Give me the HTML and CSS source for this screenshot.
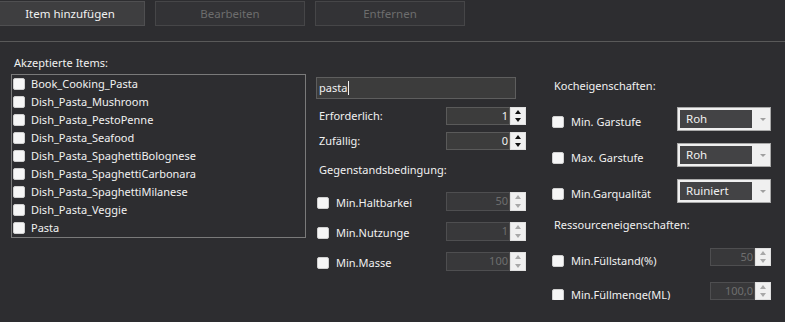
FILE: index.html
```html
<!DOCTYPE html>
<html lang="de">
<head>
    <meta charset="UTF-8">
    <meta name="viewport" content="width=device-width, initial-scale=1.0">
    <title>Item hinzufügen</title>
    <link rel="stylesheet" href="styles.css">
</head>
<body>
    <div class="toolbar">
        <button class="tool-btn">Item hinzufügen</button>
        <button class="tool-btn" disabled>Bearbeiten</button>
        <button class="tool-btn" disabled>Entfernen</button>
    </div>

    <div class="main">
        <!-- Accepted items -->
        <div class="col-items">
            <div class="group-label">Akzeptierte Items:</div>
            <div class="item-list">
                <div class="item-row"><span class="check"></span>Book_Cooking_Pasta</div>
                <div class="item-row"><span class="check"></span>Dish_Pasta_Mushroom</div>
                <div class="item-row"><span class="check"></span>Dish_Pasta_PestoPenne</div>
                <div class="item-row"><span class="check"></span>Dish_Pasta_Seafood</div>
                <div class="item-row"><span class="check"></span>Dish_Pasta_SpaghettiBolognese</div>
                <div class="item-row"><span class="check"></span>Dish_Pasta_SpaghettiCarbonara</div>
                <div class="item-row"><span class="check"></span>Dish_Pasta_SpaghettiMilanese</div>
                <div class="item-row"><span class="check"></span>Dish_Pasta_Veggie</div>
                <div class="item-row"><span class="check"></span>Pasta</div>
            </div>
        </div>

        <!-- Search + amounts + item conditions -->
        <div class="col-middle">
            <div class="text-input">pasta<span class="caret"></span></div>

            <div class="field-row first">
                <span class="field-label">Erforderlich:</span>
                <div class="spin">
                    <div class="spin-value">1</div>
                    <div class="spin-buttons"><span class="arrow-up"></span><span class="arrow-down"></span></div>
                </div>
            </div>
            <div class="field-row second">
                <span class="field-label">Zufällig:</span>
                <div class="spin">
                    <div class="spin-value">0</div>
                    <div class="spin-buttons"><span class="arrow-up"></span><span class="arrow-down"></span></div>
                </div>
            </div>

            <div class="group-label section">Gegenstandsbedingung:</div>

            <div class="cond-list">
                <div class="cond-row">
                    <span class="cond-label"><span class="check"></span>Min.Haltbarkei</span>
                    <div class="spin disabled">
                        <div class="spin-value">50</div>
                        <div class="spin-buttons"><span class="arrow-up"></span><span class="arrow-down"></span></div>
                    </div>
                </div>
                <div class="cond-row">
                    <span class="cond-label"><span class="check"></span>Min.Nutzunge</span>
                    <div class="spin disabled">
                        <div class="spin-value">1</div>
                        <div class="spin-buttons"><span class="arrow-up"></span><span class="arrow-down"></span></div>
                    </div>
                </div>
                <div class="cond-row">
                    <span class="cond-label"><span class="check"></span>Min.Masse</span>
                    <div class="spin disabled">
                        <div class="spin-value">100</div>
                        <div class="spin-buttons"><span class="arrow-up"></span><span class="arrow-down"></span></div>
                    </div>
                </div>
            </div>
        </div>

        <!-- Cooking + resource properties -->
        <div class="col-right">
            <div class="group-label">Kocheigenschaften:</div>

            <div class="combo-list">
                <div class="combo-row">
                    <span class="cond-label"><span class="check"></span>Min. Garstufe</span>
                    <div class="combo"><div class="combo-value">Roh</div><span class="combo-arrow"></span></div>
                </div>
                <div class="combo-row">
                    <span class="cond-label"><span class="check"></span>Max. Garstufe</span>
                    <div class="combo"><div class="combo-value">Roh</div><span class="combo-arrow"></span></div>
                </div>
                <div class="combo-row">
                    <span class="cond-label"><span class="check"></span>Min.Garqualität</span>
                    <div class="combo"><div class="combo-value">Ruiniert</div><span class="combo-arrow"></span></div>
                </div>
            </div>

            <div class="group-label section-res">Ressourceneigenschaften:</div>

            <div class="res-list">
                <div class="res-row">
                    <span class="cond-label"><span class="check"></span>Min.Füllstand(%)</span>
                    <div class="spin disabled small">
                        <div class="spin-value">50</div>
                        <div class="spin-buttons"><span class="arrow-up"></span><span class="arrow-down"></span></div>
                    </div>
                </div>
                <div class="res-row">
                    <span class="cond-label"><span class="check"></span>Min.Füllmenge(ML)</span>
                    <div class="spin disabled small">
                        <div class="spin-value">100,0</div>
                        <div class="spin-buttons"><span class="arrow-up"></span><span class="arrow-down"></span></div>
                    </div>
                </div>
            </div>
        </div>
    </div>
</body>
</html>
```

FILE: styles.css
```css
:root {
    --background: #2d2d30;
    --field: #3c3c3c;
    --text: #f1f1f1;
    --muted: #6e6e6e;
    --light: #f0f0f0;
}

* {
    box-sizing: border-box;
    margin: 0;
    padding: 0;
    font-family: 'Noto Sans', 'Open Sans', sans-serif;
}

body {
    background: var(--background);
    color: var(--text);
    font-size: 11px;
    line-height: 16px;
    overflow: hidden;
}

/* Toolbar */
.toolbar {
    display: flex;
    gap: 10px;
    height: 42px;
    padding-top: 1px;
    margin-left: -5px;
    border-bottom: 1px solid #595959;
}

.tool-btn {
    width: 150px;
    height: 25px;
    background: #3e3e40;
    border: 1px solid #4f4f51;
    color: var(--text);
    font-size: 11.5px;
}

.tool-btn:disabled {
    background: #333336;
    border-color: #464648;
    color: #6d6d6d;
}

/* Layout */
.main {
    display: flex;
    padding-left: 11px;
}

.group-label {
    padding-left: 3px;
    line-height: 16px;
}

.check {
    display: inline-block;
    width: 12px;
    height: 12px;
    background: #f6f6f6;
    border: 1px solid #d0d0d0;
    border-radius: 2px;
    flex-shrink: 0;
}

/* Left column */
.col-items {
    width: 295px;
    padding-top: 13px;
}

.item-list {
    margin-top: 3px;
    height: 164px;
    border: 1px solid #7a7a7a;
}

.item-row {
    display: flex;
    align-items: center;
    gap: 6px;
    height: 18px;
    padding-left: 1px;
}

/* Middle column */
.col-middle {
    width: 210px;
    margin-left: 10px;
    padding-top: 35px;
}

.text-input {
    display: flex;
    align-items: center;
    width: 200px;
    height: 22px;
    padding-left: 2px;
    background: var(--field);
    border: 1px solid #5e5e5e;
}

.caret {
    width: 1px;
    height: 14px;
    background: var(--text);
    margin-left: 1px;
}

.field-row {
    display: flex;
    justify-content: space-between;
    align-items: center;
    height: 18px;
}

.field-row.first {
    margin-top: 8px;
}

.field-row.second {
    margin-top: 7px;
}

.field-label {
    padding-left: 3px;
}

.section {
    margin-top: 12px;
}

.cond-list {
    display: flex;
    flex-direction: column;
    gap: 11px;
    margin-top: 14px;
}

.cond-row {
    display: flex;
    justify-content: space-between;
    align-items: center;
    height: 19px;
}

.cond-label {
    display: flex;
    align-items: center;
    gap: 7px;
    padding-left: 1px;
    padding-top: 2px;
}

/* Spin box */
.spin {
    display: flex;
    width: 80px;
    height: 100%;
}

.spin-value {
    flex: 1;
    text-align: right;
    padding-right: 1px;
    background: var(--field);
    border: 1px solid #5a5a5a;
    line-height: 16px;
}

.spin-buttons {
    width: 16px;
    display: flex;
    flex-direction: column;
    justify-content: space-around;
    align-items: center;
    background: var(--light);
    border: 1px solid #e0e0e0;
}

.arrow-up,
.arrow-down {
    width: 0;
    height: 0;
    border-left: 3px solid transparent;
    border-right: 3px solid transparent;
}

.arrow-up {
    border-bottom: 4px solid #111;
}

.arrow-down {
    border-top: 4px solid #111;
}

.spin.disabled .spin-value {
    background: #38383a;
    border-color: #4e4e50;
    color: var(--muted);
}

.spin.disabled .arrow-up {
    border-bottom-color: #a8a8a8;
}

.spin.disabled .arrow-down {
    border-top-color: #a8a8a8;
}

.spin.small {
    width: 61px;
}

/* Right column */
.col-right {
    width: 220px;
    margin-left: 25px;
    padding-top: 36px;
}

.combo-list {
    display: flex;
    flex-direction: column;
    gap: 12px;
    margin-top: 13px;
}

.combo-row {
    display: flex;
    justify-content: space-between;
    align-items: center;
    height: 24px;
}

.combo-row .cond-label {
    padding-top: 5px;
}

.combo {
    display: flex;
    align-items: center;
    width: 94px;
    height: 24px;
    padding: 2px 0 2px 2px;
    background: var(--light);
    border: 1px solid #a9a9a9;
}

.combo-value {
    width: 72px;
    height: 18px;
    padding-left: 6px;
    background: #434345;
    color: var(--text);
    font-size: 11.5px;
    line-height: 17px;
}

.combo-arrow {
    margin-left: 8px;
    width: 0;
    height: 0;
    border-left: 3px solid transparent;
    border-right: 3px solid transparent;
    border-top: 3px solid #a0a0a0;
}

.section-res {
    margin-top: 14px;
}

.res-list {
    display: flex;
    flex-direction: column;
    gap: 16px;
    margin-top: 15px;
}

.res-row {
    display: flex;
    justify-content: space-between;
    align-items: center;
    height: 18px;
}

.res-row .cond-label {
    padding-top: 8px;
}
```
